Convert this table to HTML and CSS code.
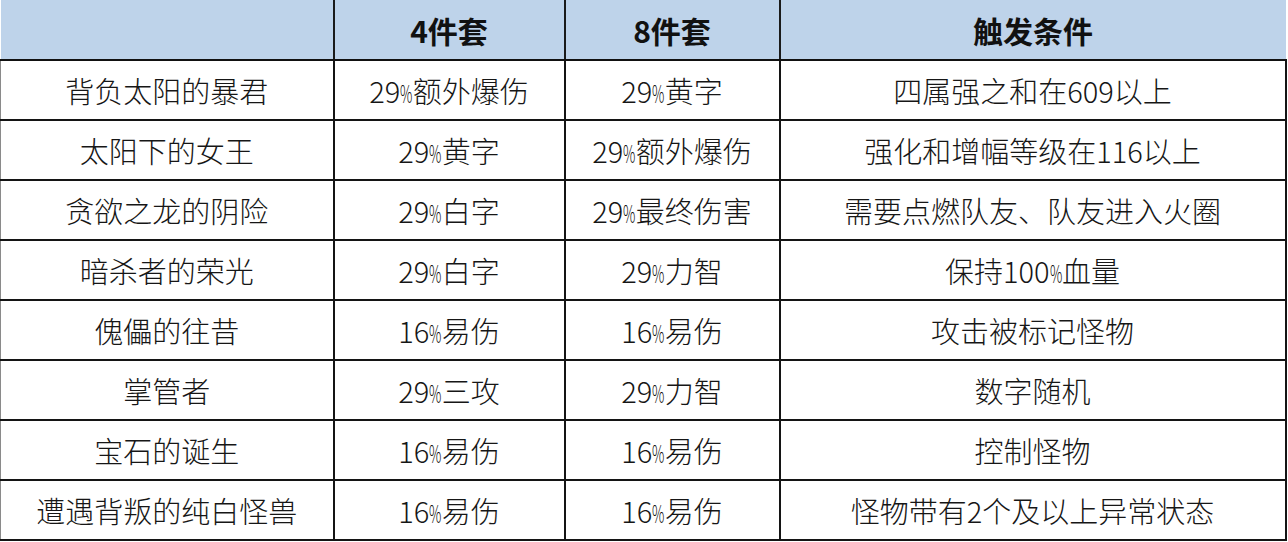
FILE: index.html
```html
<!DOCTYPE html>
<html lang="zh-CN">
<head>
<meta charset="utf-8">
<link rel="stylesheet" href="styles.css">
</head>
<body>
<table class="sets">
  <colgroup>
    <col class="c1"><col class="c2"><col class="c3"><col class="c4">
  </colgroup>
  <thead>
    <tr>
      <th></th>
      <th>4件套</th>
      <th>8件套</th>
      <th>触发条件</th>
    </tr>
  </thead>
  <tbody>
    <tr><td>背负太阳的暴君</td><td>29<span class="pct">%</span>额外爆伤</td><td>29<span class="pct">%</span>黄字</td><td>四属强之和在609以上</td></tr>
    <tr><td>太阳下的女王</td><td>29<span class="pct">%</span>黄字</td><td>29<span class="pct">%</span>额外爆伤</td><td>强化和增幅等级在116以上</td></tr>
    <tr><td>贪欲之龙的阴险</td><td>29<span class="pct">%</span>白字</td><td>29<span class="pct">%</span>最终伤害</td><td>需要点燃队友、队友进入火圈</td></tr>
    <tr><td>暗杀者的荣光</td><td>29<span class="pct">%</span>白字</td><td>29<span class="pct">%</span>力智</td><td>保持100<span class="pct">%</span>血量</td></tr>
    <tr><td>傀儡的往昔</td><td>16<span class="pct">%</span>易伤</td><td>16<span class="pct">%</span>易伤</td><td>攻击被标记怪物</td></tr>
    <tr><td>掌管者</td><td>29<span class="pct">%</span>三攻</td><td>29<span class="pct">%</span>力智</td><td>数字随机</td></tr>
    <tr><td>宝石的诞生</td><td>16<span class="pct">%</span>易伤</td><td>16<span class="pct">%</span>易伤</td><td>控制怪物</td></tr>
    <tr><td>遭遇背叛的纯白怪兽</td><td>16<span class="pct">%</span>易伤</td><td>16<span class="pct">%</span>易伤</td><td>怪物带有2个及以上异常状态</td></tr>
  </tbody>
</table>
</body>
</html>
```

FILE: styles.css
```css
html, body {
  margin: 0;
  padding: 0;
  background: #ffffff;
}

.sets {
  border-collapse: collapse;
  table-layout: fixed;
  width: 1285px;
  font-family: "Noto Sans CJK SC", "Noto Sans", sans-serif;
  color: #161616;
}

.c1 { width: 333px; }
.c2 { width: 231px; }
.c3 { width: 215px; }
.c4 { width: 506px; }

.sets th {
  background: #bed3ea;
  height: 59px;
  padding: 0;
  font-size: 30px;
  font-weight: 700;
  color: #111;
  text-align: center;
  border-left: 2px solid #1a1a1a;
  border-bottom: 2px solid #111;
}

.sets th:first-child {
  border-left: none;
}

.sets td {
  height: 58px;
  padding: 0;
  font-size: 29px;
  font-weight: 300;
  text-align: center;
  border: 2px solid #141414;
  line-height: 1;
}

.sets td:first-child {
  border-left: 1px solid #8a8a8a;
}

.pct {
  display: inline-block;
  font-size: 25px;
  transform: scaleX(0.55);
  margin: 0 -5px;
}
```
